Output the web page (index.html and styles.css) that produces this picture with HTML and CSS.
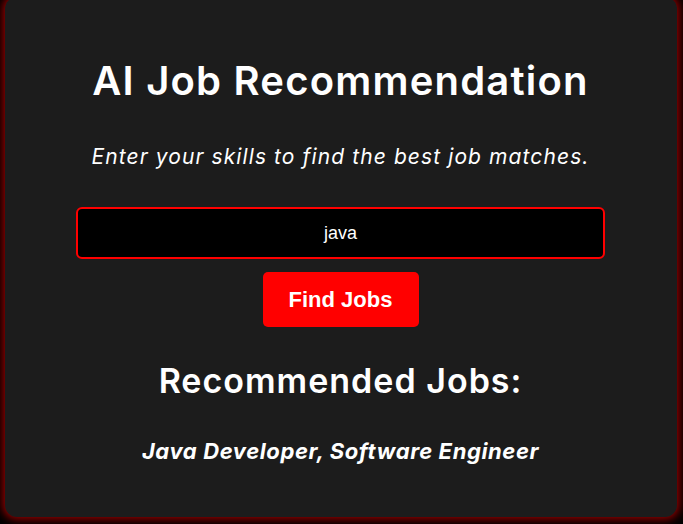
FILE: index.html
```html
<!DOCTYPE html>
<html lang="en">
<head>
<meta charset="utf-8">
<title>AI Job Recommendation</title>
<link rel="stylesheet" href="styles.css">
</head>
<body>
<main class="card">
  <h1 class="title">AI Job Recommendation</h1>
  <p class="subtitle">Enter your skills to find the best job matches.</p>
  <input class="skills" type="text" value="java">
  <button class="find-btn" type="button">Find Jobs</button>
  <h2 class="rec-title">Recommended Jobs:</h2>
  <p class="rec-list">Java Developer, Software Engineer</p>
</main>
</body>
</html>
```
FILE: styles.css
```css
html, body {
  margin: 0;
  padding: 0;
  background: #000;
}
body {
  padding: 0 6px 7px 5px;
  overflow: hidden;
  height: 524px;
  box-sizing: border-box;
}
.card {
  margin-top: -3px;
  height: 520px;
  box-sizing: border-box;
  background: #1c1c1c;
  border-radius: 12px;
  box-shadow: 0 0 10px 2px rgba(200, 0, 0, 0.8);
  padding: 0 72px 0 71px;
  display: flex;
  flex-direction: column;
  align-items: center;
  font-family: Inter, "Open Sans", sans-serif;
  color: #fff;
}
.title {
  margin: 60px 0 0;
  font-size: 40px;
  line-height: 48px;
  font-weight: 600;
  letter-spacing: 1.2px;
}
.subtitle {
  margin: 38px 0 0;
  font-size: 21px;
  line-height: 28px;
  font-style: italic;
  font-weight: 400;
  letter-spacing: 1.1px;
}
.skills {
  margin-top: 36px;
  width: 100%;
  height: 52px;
  box-sizing: border-box;
  background: #000;
  border: 2px solid #f00;
  border-radius: 6px;
  color: #fff;
  font-family: "Liberation Sans", Arial, sans-serif;
  font-size: 18px;
  text-align: center;
  outline: none;
}
.find-btn {
  margin-top: 13px;
  width: 156px;
  height: 55px;
  background: #f00;
  border: none;
  border-radius: 5px;
  color: #fff;
  font-family: "Liberation Sans", Arial, sans-serif;
  font-size: 22px;
  font-weight: 700;
}
.rec-title {
  margin: 34px 0 0;
  font-size: 34px;
  line-height: 40px;
  font-weight: 600;
  letter-spacing: 1px;
}
.rec-list {
  margin: 36px 0 0;
  font-size: 22px;
  line-height: 28px;
  font-weight: 700;
  font-style: italic;
  letter-spacing: 0.6px;
}
```
